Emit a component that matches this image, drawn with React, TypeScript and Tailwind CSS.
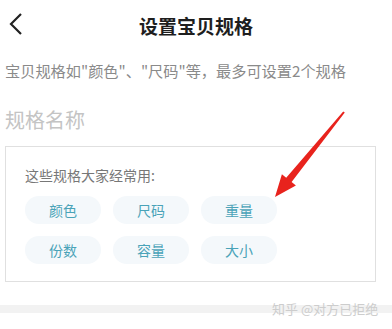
const specs = [
  ["颜色", "尺码", "重量"],
  ["份数", "容量", "大小"],
];

const font = { fontFamily: '"Noto Sans CJK SC", "Noto Sans", sans-serif' };

export default function App() {
  return (
    <div className="relative w-[392px] h-[329px] bg-white overflow-hidden" style={font}>
      {/* header */}
      <div className="relative h-[50px] flex items-center justify-center">
        <svg className="absolute left-[9px] top-[12px]" width="16" height="24" viewBox="0 0 16 24">
          <path d="M12 2 L2 12 L12 22" fill="none" stroke="#222" strokeWidth="2.2" />
        </svg>
        <span className="text-[19px] font-bold text-[#1e1e1e] leading-none">设置宝贝规格</span>
      </div>

      <div className="mt-[9px] pl-[5px] text-[15.2px] text-[#8a8a8a] leading-[22px] whitespace-nowrap">
        宝贝规格如"颜色"、"尺码"等，最多可设置2个规格
      </div>

      <div className="mt-[25px] pl-[5px] text-[20px] text-[#c4c4c4] leading-[28px]">规格名称</div>

      <div className="mt-[12px] mx-[5px] w-[371px] border border-[#e0e0e0] pt-[18px] pb-[17px] pl-[19px]">
        <div className="text-[14px] text-[#777] leading-[20px]">这些规格大家经常用:</div>
        <div className="mt-[11px] flex flex-col gap-[12px]">
          {specs.map((row, i) => (
            <div key={i} className="flex gap-[12px]">
              {row.map((s) => (
                <div
                  key={s}
                  className="w-[76px] h-[28px] rounded-full bg-[#f4f8fb] flex items-center justify-center text-[14px] text-[#4aa3b8]"
                >
                  {s}
                </div>
              ))}
            </div>
          ))}
        </div>
      </div>

      <div className="mt-[23px] h-[8px] bg-[#f2f2f2]" />

      <div className="absolute left-[272px] top-[301px] text-[13px] text-[#cdcdcd] leading-[16px] whitespace-nowrap">
        知乎 @对方已拒绝
      </div>

      <svg className="absolute left-0 top-0 pointer-events-none" width="392" height="329" viewBox="0 0 392 329">
        <polygon
          points="343.2,111.4 344.8,112.6 291.6,182.1 295.9,185.6 275,197 281.9,174.2 286.2,177.7"
          fill="#e8231d"
        />
      </svg>
    </div>
  );
}
